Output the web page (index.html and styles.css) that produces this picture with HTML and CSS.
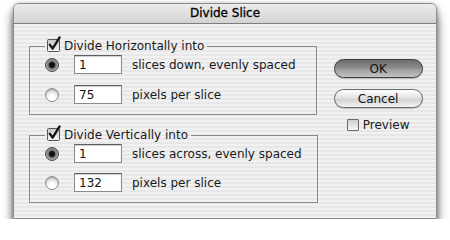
FILE: index.html
```html
<!DOCTYPE html>
<html>
<head>
  <title>Divide Slice</title>
  <link rel="stylesheet" href="styles.css">
</head>
<body>
  <div class="window">
    <div class="titlebar">Divide Slice</div>
    <div class="content">
      <div class="groups">
        <fieldset class="group">
          <legend>
            <svg class="check" width="14" height="16" viewBox="0 0 14 16">
              <rect x="0.5" y="3.5" width="12" height="12" rx="1" fill="url(#box)" stroke="#555"/>
              <path d="M2.8 8.6 L5.6 12.6 L12.6 1.4" fill="none" stroke="#111" stroke-width="2.3" stroke-linecap="round" stroke-linejoin="round"/>
            </svg>
            Divide Horizontally into
          </legend>
          <div class="row">
            <span class="radio on"></span>
            <input class="field" type="text" value="1">
            <span class="label">slices down, evenly spaced</span>
          </div>
          <div class="row">
            <span class="radio"></span>
            <input class="field" type="text" value="75">
            <span class="label">pixels per slice</span>
          </div>
        </fieldset>

        <fieldset class="group">
          <legend>
            <svg class="check" width="14" height="16" viewBox="0 0 14 16">
              <rect x="0.5" y="3.5" width="12" height="12" rx="1" fill="url(#box)" stroke="#555"/>
              <path d="M2.8 8.6 L5.6 12.6 L12.6 1.4" fill="none" stroke="#111" stroke-width="2.3" stroke-linecap="round" stroke-linejoin="round"/>
            </svg>
            Divide Vertically into
          </legend>
          <div class="row">
            <span class="radio on"></span>
            <input class="field" type="text" value="1">
            <span class="label">slices across, evenly spaced</span>
          </div>
          <div class="row">
            <span class="radio"></span>
            <input class="field" type="text" value="132">
            <span class="label">pixels per slice</span>
          </div>
        </fieldset>
      </div>

      <div class="actions">
        <button type="button" class="btn default">OK</button>
        <button type="button" class="btn">Cancel</button>
        <label class="preview"><span class="box"></span>Preview</label>
      </div>
    </div>
  </div>

  <svg width="0" height="0" class="defs">
    <defs>
      <linearGradient id="box" x1="0" y1="0" x2="0" y2="1">
        <stop offset="0" stop-color="#c8c8c8"/>
        <stop offset="1" stop-color="#f4f4f4"/>
      </linearGradient>
    </defs>
  </svg>
</body>
</html>
```

FILE: styles.css
```css
body {
  margin: 0;
  background: #fff;
  font-family: "DejaVu Sans", sans-serif;
  font-size: 12px;
  color: #1a1a1a;
}

.defs {
  position: absolute;
}

.window {
  margin: 3px 0 0 13px;
  width: 424px;
  height: 216px;
  box-sizing: border-box;
  border: 1px solid #8c8c8c;
  border-radius: 6px 6px 0 0;
  background: repeating-linear-gradient(#f1f1f1 0 2px, #e7e7e7 2px 4px);
  box-shadow: 0 9px 11px rgba(0, 0, 0, 0.6), 0 1px 5px rgba(0, 0, 0, 0.35);
  overflow: hidden;
}

.titlebar {
  height: 19px;
  line-height: 19px;
  text-align: center;
  background: linear-gradient(#ececec, #d2d2d2);
  border-bottom: 1px solid #7d7d7d;
  font-size: 12px;
  color: #000;
  -webkit-text-stroke: 0.3px #000;
}

.content {
  display: flex;
  padding: 14px 15px 0 15px;
}

.groups {
  display: flex;
  flex-direction: column;
  gap: 12px;
}

.group {
  width: 288px;
  box-sizing: border-box;
  margin: 0;
  border: 1px solid #8a8a8a;
  padding: 1px 15px 10px 15px;
  display: flex;
  flex-direction: column;
  gap: 11px;
}

.group + .group {
  gap: 10px;
}

.group legend {
  padding: 0 3px 0 2px;
  height: 16px;
  line-height: 16px;
  display: flex;
  align-items: center;
  gap: 3px;
}

.check {
  margin-top: -4px;
}

.row {
  display: flex;
  align-items: center;
  height: 19px;
}

.label {
  white-space: nowrap;
}

.radio {
  width: 14px;
  height: 14px;
  box-sizing: border-box;
  border-radius: 50%;
  border: 1px solid #8c8c8c;
  background: radial-gradient(circle at 50% 75%, #ffffff 0 3px, #d8d8d8 8px);
  box-shadow: inset 0 1px 1px rgba(0, 0, 0, 0.25);
  margin-right: 15px;
}

.radio.on {
  border-color: #4a4a4a;
  background: radial-gradient(circle, #111 0 2.5px, #6e6e6e 3.5px, #9a9a9a 5px, #c6c6c6 7px);
}

.field {
  width: 48px;
  height: 19px;
  box-sizing: border-box;
  border: 1px solid #8a8a8a;
  border-top-color: #5e5e5e;
  box-shadow: inset 0 1px 1px rgba(0, 0, 0, 0.2);
  background: #fff;
  font: 12px "DejaVu Sans", sans-serif;
  color: #111;
  padding: 1px 3px 0 4px;
  margin-right: 10px;
}

.actions {
  margin-left: 16px;
  padding-top: 21px;
  width: 89px;
  display: flex;
  flex-direction: column;
  align-items: center;
}

.btn {
  width: 89px;
  height: 19px;
  border-radius: 10px;
  border: 1px solid #6a6a6a;
  background: linear-gradient(#ffffff, #e4e4e4 45%, #d2d2d2 55%, #f4f4f4);
  font: 12px "DejaVu Sans", sans-serif;
  color: #111;
  padding: 0;
  margin-bottom: 11px;
  box-shadow: 0 1px 1px rgba(0, 0, 0, 0.2);
}

.btn.default {
  border-color: #3e3e3e;
  background: linear-gradient(#6c6c6c, #8a8a8a 45%, #9c9c9c 55%, #c4c4c4);
}

.preview {
  display: flex;
  align-items: center;
  gap: 4px;
  margin-top: -1px;
}

.preview .box {
  width: 12px;
  height: 12px;
  box-sizing: border-box;
  border: 1px solid #6a6a6a;
  border-radius: 1px;
  background: linear-gradient(#cfcfcf, #f6f6f6);
}
```
